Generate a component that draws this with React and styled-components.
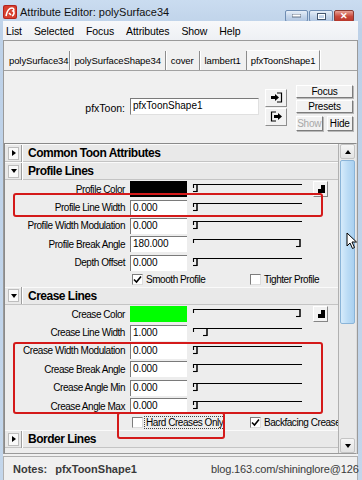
import React from "react";
import styled, { createGlobalStyle } from "styled-components";

const GlobalStyle = createGlobalStyle`
  html, body { margin: 0; padding: 0; background: #fff; }
  body { font-family: "Liberation Sans", Arial, sans-serif; color: #000; }
  * { box-sizing: border-box; }
`;

const Window = styled.div`
  position: relative;
  width: 362px;
  height: 480px;
  overflow: hidden;
  display: flex;
  flex-direction: column;
  background: linear-gradient(#cadcf0, #bdd1e8 30px, #c3d6eb);
`;

const TitleBar = styled.div`
  height: 21px;
  flex: none;
  display: flex;
  align-items: center;
  padding: 3px 0 0 3px;
  font-size: 11px;
  color: #111;
`;

const AppIcon = styled.svg`
  width: 14px;
  height: 14px;
  margin-right: 3px;
`;

const WinButtons = styled.div`
  display: flex;
  gap: 1px;
  margin-left: auto;
  margin-right: 8px;
  align-self: flex-start;
  margin-top: 7px;
`;

const WinButton = styled.div`
  width: ${(p) => p.$w}px;
  height: 12px;
  border: 1px solid ${(p) => (p.$close ? "#8a3b33" : "#6f8db3")};
  border-radius: 2px;
  background: ${(p) =>
    p.$close
      ? "linear-gradient(#e8a296, #c9483b 55%, #b8372b)"
      : "linear-gradient(#e6eef8, #c4d5ea 55%, #b2c7e2)"};
  display: flex;
  align-items: center;
  justify-content: center;
  color: #fff;
  font-size: 9px;
  font-weight: bold;
`;

const Client = styled.div`
  flex: 1;
  margin: 0 4px 0 3px;
  background: #f0f0f0;
  display: flex;
  flex-direction: column;
  min-height: 0;
`;

const MenuBar = styled.div`
  height: 19px;
  flex: none;
  display: flex;
  align-items: center;
  background: linear-gradient(#f7f8fa, #eef0f4);
  font-size: 10.5px;
  letter-spacing: -0.1px;
`;

const MenuItem = styled.span`
  padding: 0 6px;
  &:first-child { padding-left: 3px; }
`;

const Panel = styled.div`
  flex: 1;
  display: flex;
  flex-direction: column;
  border: 1px solid #9a9a9a;
  border-bottom: none;
  min-height: 0;
`;

const TabArea = styled.div`
  height: 30px;
  flex: none;
  display: flex;
  align-items: flex-end;
  padding: 10px 0 0 4px;
  border-bottom: 1px solid #a2a2a2;
`;

const Tab = styled.div`
  height: ${(p) => (p.$active ? 20 : 19)}px;
  display: flex;
  align-items: center;
  padding: 0 ${(p) => p.$pad || 4}px;
  font-size: 9.5px;
  letter-spacing: -0.1px;
  border-right: 1px solid #8c8c8c;
  box-shadow: 1px 0 0 #fff;
  background: ${(p) => (p.$active ? "#f6f6f6" : "transparent")};
  border-top: ${(p) => (p.$active ? "1px solid #fff" : "none")};
`;

const Header = styled.div`
  height: 72px;
  flex: none;
  display: flex;
  align-items: center;
  padding-top: 1px;
`;

const HeaderLabel = styled.div`
  width: 121px;
  text-align: right;
  font-size: 10.5px;
  margin-right: 5px;
`;

const NameField = styled.div`
  width: 129px;
  height: 17px;
  background: #fff;
  border-top: 1px solid #7a7a7a;
  border-left: 1px solid #7a7a7a;
  border-bottom: 1px solid #e0e0e0;
  border-right: 1px solid #e0e0e0;
  font-size: 10px;
  padding: 1px 2px;
  margin-top: -2px;
`;

const IconColumn = styled.div`
  display: flex;
  flex-direction: column;
  gap: 1px;
  margin-left: 6px;
  margin-top: -1px;
`;

const IconButton = styled.div`
  width: 22px;
  height: 18px;
  display: flex;
  align-items: center;
  justify-content: center;
  background: #f2f2f2;
  border: 1px solid;
  border-color: #fff #8e8e8e #8e8e8e #fff;
`;

const ButtonColumn = styled.div`
  display: flex;
  flex-direction: column;
  gap: 2px;
  margin-left: 9px;
  width: 57px;
`;

const ButtonRow = styled.div`
  display: flex;
  gap: 4px;
  margin-top: 1px;
`;

const Button = styled.div`
  flex: 1;
  height: ${(p) => p.$h || 17}px;
  display: flex;
  align-items: center;
  justify-content: center;
  font-size: 10px;
  letter-spacing: -0.2px;
  color: ${(p) => (p.$disabled ? "#a8a8a8" : "#000")};
  background: #f2f2f2;
  border: 1px solid;
  border-color: #fff #7c7c7c #7c7c7c #fff;
  box-shadow: 1px 1px 0 #b8b8b8;
`;

const ScrollFrame = styled.div`
  flex: 1;
  display: flex;
  border: 1px solid;
  border-color: #8a8a8a #dcdcdc #9a9a9a #8a8a8a;
  min-height: 0;
`;

const Content = styled.div`
  flex: 1;
  overflow: hidden;
  background: #ededed;
  border-right: 1px solid #b0b0b0;
`;

const SectionHeader = styled.div`
  height: 18px;
  display: flex;
  align-items: center;
  border-bottom: 1px solid #c4c4c4;
  border-top: 1px solid #fafafa;
  background: #e9e9e9;
`;

const ToggleBox = styled.div`
  width: 11px;
  height: 13px;
  margin-left: 3px;
  background: #f9f9f9;
  border: 1px solid #bdbdbd;
  display: flex;
  align-items: center;
  justify-content: center;
`;

const Tri = styled.span`
  width: 0;
  height: 0;
  border-style: solid;
  border-color: transparent;
  ${(p) =>
    p.$open
      ? "border-width: 4px 3px 0 3px; border-top-color: #000;"
      : "border-width: 3px 0 3px 4px; border-left-color: #000;"}
  ${(p) => (p.$up ? "transform: rotate(180deg);" : "")}
`;

const HeaderDivider = styled.div`
  width: 1px;
  height: 17px;
  margin-left: 2px;
  background: #9e9e9e;
  box-shadow: 1px 0 0 #fff;
`;

const SectionTitle = styled.div`
  margin-left: 6px;
  font-size: 12px;
  font-weight: bold;
  letter-spacing: -0.5px;
`;

const Row = styled.div`
  height: 18.4px;
  display: flex;
  align-items: center;
`;

const Label = styled.div`
  width: 120px;
  text-align: right;
  font-size: 10px;
  letter-spacing: -0.45px;
  white-space: nowrap;
  margin-right: 5px;
`;

const Field = styled.div`
  width: 57px;
  height: 16px;
  flex: none;
  background: ${(p) => p.$swatch || "#fff"};
  border-top: 1px solid ${(p) => (p.$swatch ? p.$swatch : "#7a7a7a")};
  border-left: 1px solid ${(p) => (p.$swatch ? p.$swatch : "#7a7a7a")};
  font-size: 10px;
  letter-spacing: -0.1px;
  padding: 1px 0 0 2px;
`;

const SliderSvg = styled.svg`
  width: 112px;
  height: 16px;
  margin-left: 5px;
  flex: none;
`;

const MapButton = styled.div`
  width: 15px;
  height: 16px;
  margin-left: 9px;
  background: #f2f2f2;
  border: 1px solid;
  border-color: #fff #858585 #858585 #fff;
  display: flex;
  align-items: center;
  justify-content: center;
`;

const CheckRow = styled.div`
  height: 15px;
  display: flex;
  align-items: center;
  padding-left: 127px;
  white-space: nowrap;
`;

const CheckItem = styled.div`
  flex: none;
  display: flex;
  align-items: center;
  width: ${(p) => (p.$w ? `${p.$w}px` : "auto")};
  font-size: 10px;
  letter-spacing: -0.45px;
`;

const Box = styled.div`
  width: 11px;
  height: 11px;
  flex: none;
  background: #fff;
  border: 1px solid;
  border-color: #7d7d7d #dcdcdc #dcdcdc #7d7d7d;
  display: flex;
  align-items: center;
  justify-content: center;
  margin-right: 2px;
`;

const CheckText = styled.span`
  outline: ${(p) => (p.$focus ? "1px dotted #444" : "none")};
  padding: 0 1px;
`;

const ScrollBar = styled.div`
  width: 17px;
  flex: none;
  display: flex;
  flex-direction: column;
  background: #e9e9e9;
  padding: 0 1px;
`;

const ArrowBtn = styled.div`
  height: 15px;
  flex: none;
  display: flex;
  align-items: center;
  justify-content: center;
  background: linear-gradient(#f6f6f6, #e2e2e2);
  border: 1px solid #c4c4c4;
  border-radius: 2px;
`;

const Thumb = styled.div`
  height: 164px;
  margin-top: 1px;
  background: linear-gradient(90deg, #d6ebfb, #bcdcf5 50%, #a9d0f0);
  border: 1px solid #8ab4d8;
  border-radius: 2px;
`;

const Track = styled.div`
  flex: 1;
`;

const NotesBar = styled.div`
  height: 24px;
  flex: none;
  margin-top: 2px;
  border: 1px solid #b0b0b0;
  border-bottom: none;
  display: flex;
  align-items: center;
  padding-left: 9px;
  font-size: 11px;
  font-weight: bold;
  color: #3a3a3a;
  background: #f0f0f0;
`;

const NotesValue = styled.span`
  margin-left: 8px;
`;

const Annotation = styled.div`
  position: absolute;
  border: 2px solid #d41a1a;
  border-radius: 3px;
  pointer-events: none;
`;

const Watermark = styled.div`
  position: absolute;
  left: 211px;
  top: 463px;
  font-size: 11px;
  letter-spacing: -0.15px;
  color: #3a3a3a;
  white-space: nowrap;
`;

const Cursor = styled.svg`
  position: absolute;
  left: 346px;
  top: 232px;
  width: 12px;
  height: 18px;
`;

function Slider({ at }) {
  const right = at > 100;
  return (
    <SliderSvg viewBox="0 0 112 16">
      <g stroke="#000" fill="none" strokeWidth="1.1">
        <line x1="1.5" y1="3" x2="1.5" y2="7" />
        <line x1="1.5" y1="3.5" x2={right ? at : 110} y2="3.5" />
        <line x1={at} y1="3" x2={at} y2="11" strokeWidth="1.5" />
        <line x1={at - 4} y1="10.5" x2={at} y2="10.5" />
      </g>
    </SliderSvg>
  );
}

function MapIcon() {
  return (
    <svg width="9" height="9" viewBox="0 0 9 9">
      <rect x="5" y="0" width="4" height="4" fill="#000" />
      <rect x="2" y="4" width="3" height="4" fill="#000" />
      <rect x="5" y="4" width="4" height="4" fill="#000" />
    </svg>
  );
}

function Check() {
  return (
    <svg width="9" height="9" viewBox="0 0 9 9">
      <path d="M1 4.5 L3.5 7 L8 1.5" stroke="#000" strokeWidth="1.6" fill="none" />
    </svg>
  );
}

function AttrRow({ label, value, swatch, at = 5, map }) {
  return (
    <Row>
      <Label>{label}</Label>
      <Field $swatch={swatch}>{value}</Field>
      <Slider at={at} />
      {map && (
        <MapButton>
          <MapIcon />
        </MapButton>
      )}
    </Row>
  );
}

function SectionHead({ title, open }) {
  return (
    <SectionHeader>
      <ToggleBox>
        <Tri $open={open} />
      </ToggleBox>
      <HeaderDivider />
      <SectionTitle>{title}</SectionTitle>
    </SectionHeader>
  );
}

export default function App() {
  return (
    <>
      <GlobalStyle />
      <Window>
        <TitleBar>
          <AppIcon viewBox="0 0 14 14">
            <rect x="0" y="0" width="14" height="14" rx="2" fill="#b4231d" />
            <rect x="1" y="1" width="12" height="12" rx="1.5" fill="#d8402f" />
            <path d="M3 11 C4 6 6 3 9 3 C11 3 11.5 5 10 6 C12 7 11 10 9 11 M6 8 L8 10" stroke="#fff" strokeWidth="1.6" fill="none" />
          </AppIcon>
          Attribute Editor: polySurface34
          <WinButtons>
            <WinButton $w={23}>
              <svg width="9" height="4"><rect x="0" y="0" width="9" height="3" fill="#fff" stroke="#44566e" strokeWidth="0.8" /></svg>
            </WinButton>
            <WinButton $w={24}>
              <svg width="9" height="7"><rect x="0.5" y="0.5" width="8" height="6" fill="none" stroke="#44566e" strokeWidth="1" /><rect x="1.5" y="1.5" width="6" height="4" fill="none" stroke="#fff" strokeWidth="1" /></svg>
            </WinButton>
            <WinButton $w={20} $close>
              ✕
            </WinButton>
          </WinButtons>
        </TitleBar>
        <Client>
          <MenuBar>
            <MenuItem>List</MenuItem>
            <MenuItem>Selected</MenuItem>
            <MenuItem>Focus</MenuItem>
            <MenuItem>Attributes</MenuItem>
            <MenuItem>Show</MenuItem>
            <MenuItem>Help</MenuItem>
          </MenuBar>
          <Panel>
            <TabArea>
              <Tab $pad={1}>polySurface34</Tab>
              <Tab>polySurfaceShape34</Tab>
              <Tab $pad={5}>cover</Tab>
              <Tab $pad={5}>lambert1</Tab>
              <Tab $active $pad={4}>pfxToonShape1</Tab>
            </TabArea>
            <Header>
              <HeaderLabel>pfxToon:</HeaderLabel>
              <NameField>pfxToonShape1</NameField>
              <IconColumn>
                <IconButton>
                  <svg width="13" height="11" viewBox="0 0 13 11">
                    <path d="M7 1 H11.5 V10 H7" stroke="#000" fill="none" strokeWidth="1.2" />
                    <rect x="1" y="4" width="4" height="3" fill="#000" />
                    <path d="M5 2 L9 5.5 L5 9 Z" fill="#000" />
                  </svg>
                </IconButton>
                <IconButton>
                  <svg width="13" height="11" viewBox="0 0 13 11">
                    <path d="M6 1 H1.5 V10 H6" stroke="#000" fill="none" strokeWidth="1.2" />
                    <rect x="4" y="4" width="4" height="3" fill="#000" />
                    <path d="M8 2 L12 5.5 L8 9 Z" fill="#000" />
                  </svg>
                </IconButton>
              </IconColumn>
              <ButtonColumn>
                <Button>Focus</Button>
                <Button>Presets</Button>
                <ButtonRow>
                  <Button $h={15} $disabled>Show</Button>
                  <Button $h={15}>Hide</Button>
                </ButtonRow>
              </ButtonColumn>
            </Header>
            <ScrollFrame>
              <Content>
                <SectionHead title="Common Toon Attributes" />
                <SectionHead title="Profile Lines" open />
                <AttrRow label="Profile Color" swatch="#000" map />
                <AttrRow label="Profile Line Width" value="0.000" />
                <AttrRow label="Profile Width Modulation" value="0.000" />
                <AttrRow label="Profile Break Angle" value="180.000" at={108} />
                <AttrRow label="Depth Offset" value="0.000" />
                <CheckRow>
                  <CheckItem $w={118}>
                    <Box><Check /></Box>
                    <CheckText>Smooth Profile</CheckText>
                  </CheckItem>
                  <CheckItem>
                    <Box />
                    <CheckText>Tighter Profile</CheckText>
                  </CheckItem>
                </CheckRow>
                <SectionHead title="Crease Lines" open />
                <AttrRow label="Crease Color" swatch="#00ff00" at={108} map />
                <AttrRow label="Crease Line Width" value="1.000" at={15} />
                <AttrRow label="Crease Width Modulation" value="0.000" />
                <AttrRow label="Crease Break Angle" value="0.000" />
                <AttrRow label="Crease Angle Min" value="0.000" />
                <AttrRow label="Crease Angle Max" value="0.000" />
                <CheckRow>
                  <CheckItem $w={118}>
                    <Box />
                    <CheckText $focus>Hard Creases Only</CheckText>
                  </CheckItem>
                  <CheckItem>
                    <Box><Check /></Box>
                    <CheckText>Backfacing Creases</CheckText>
                  </CheckItem>
                </CheckRow>
                <SectionHead title="Border Lines" />
              </Content>
              <ScrollBar>
                <ArrowBtn>
                  <Tri $open $up />
                </ArrowBtn>
                <Thumb />
                <Track />
                <ArrowBtn>
                  <Tri $open />
                </ArrowBtn>
              </ScrollBar>
            </ScrollFrame>
          </Panel>
          <NotesBar>
            Notes:<NotesValue>pfxToonShape1</NotesValue>
          </NotesBar>
        </Client>
        <Annotation style={{ left: 13, top: 193, width: 310, height: 24 }} />
        <Annotation style={{ left: 13, top: 342, width: 310, height: 72 }} />
        <Annotation style={{ left: 117, top: 412, width: 108, height: 27 }} />
        <Cursor viewBox="0 0 12 18">
          <path d="M1 1 L1 14 L4 11 L6.5 16.5 L8.5 15.5 L6 10 L10.5 10 Z" fill="#fff" stroke="#000" strokeWidth="1" />
        </Cursor>
        <Watermark>blog.163.com/shininglore@126</Watermark>
      </Window>
    </>
  );
}
